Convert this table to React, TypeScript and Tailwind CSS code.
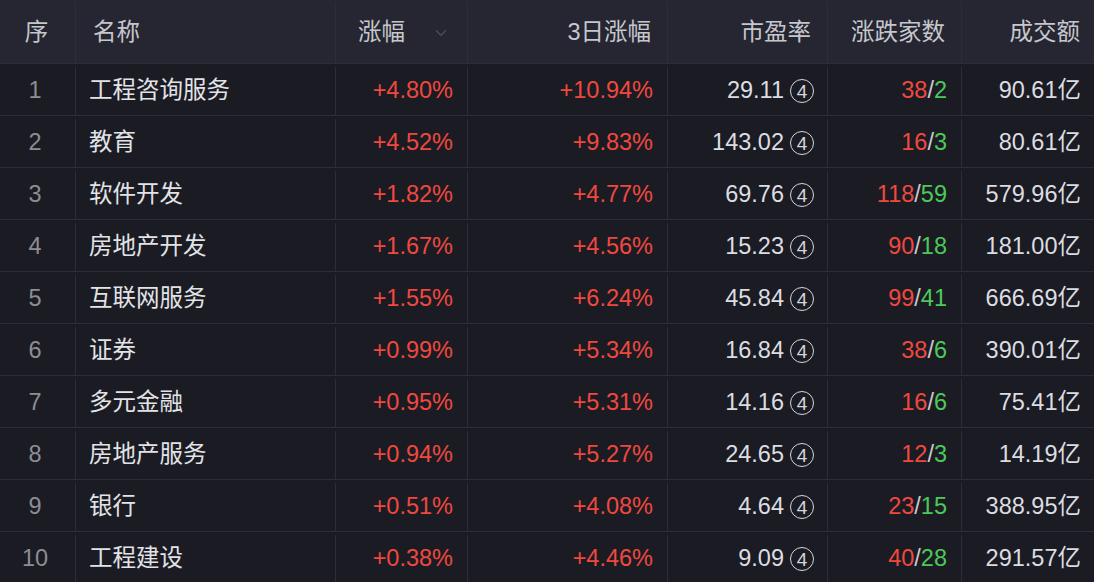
import { ChevronDown } from "lucide-react";

type Row = {
  name: string;
  chg: string;
  chg3: string;
  pe: string;
  up: number;
  down: number;
  amount: string;
};

const rows: Row[] = [
  { name: "工程咨询服务", chg: "+4.80%", chg3: "+10.94%", pe: "29.11", up: 38, down: 2, amount: "90.61亿" },
  { name: "教育", chg: "+4.52%", chg3: "+9.83%", pe: "143.02", up: 16, down: 3, amount: "80.61亿" },
  { name: "软件开发", chg: "+1.82%", chg3: "+4.77%", pe: "69.76", up: 118, down: 59, amount: "579.96亿" },
  { name: "房地产开发", chg: "+1.67%", chg3: "+4.56%", pe: "15.23", up: 90, down: 18, amount: "181.00亿" },
  { name: "互联网服务", chg: "+1.55%", chg3: "+6.24%", pe: "45.84", up: 99, down: 41, amount: "666.69亿" },
  { name: "证券", chg: "+0.99%", chg3: "+5.34%", pe: "16.84", up: 38, down: 6, amount: "390.01亿" },
  { name: "多元金融", chg: "+0.95%", chg3: "+5.31%", pe: "14.16", up: 16, down: 6, amount: "75.41亿" },
  { name: "房地产服务", chg: "+0.94%", chg3: "+5.27%", pe: "24.65", up: 12, down: 3, amount: "14.19亿" },
  { name: "银行", chg: "+0.51%", chg3: "+4.08%", pe: "4.64", up: 23, down: 15, amount: "388.95亿" },
  { name: "工程建设", chg: "+0.38%", chg3: "+4.46%", pe: "9.09", up: 40, down: 28, amount: "291.57亿" },
];

const cols = "grid grid-cols-[75px_260px_132px_200px_160px_134px_133px]";
const cell = "flex items-center border-l border-[#2c2d38]";

// the circled "4" after each P/E value
function Circled({ n }: { n: number }) {
  return (
    <span className="ml-[6px] flex h-[24px] w-[24px] shrink-0 items-center justify-center rounded-full border-[1.5px] border-[#d6d7dc] pt-[1px] text-[19px] leading-none text-[#d6d7dc]">
      {n}
    </span>
  );
}

export default function App() {
  return (
    <div
      className="h-[582px] w-[1094px] overflow-hidden bg-[#1b1c23] text-[23.5px] leading-none"
      style={{ fontFamily: '"Liberation Sans", "Noto Sans CJK SC", sans-serif' }}
    >
      {/* header */}
      <div className={`${cols} h-[64px] border-b border-[#2c2d38] bg-[#252631] pt-[2px] text-[#c6c7cd]`}>
        <div className="flex items-center justify-center pr-[2px]">序</div>
        <div className={`${cell} pl-[17px]`}>名称</div>
        <div className={`${cell} justify-end pr-[17px]`}>
          <span>涨幅</span>
          <ChevronDown className="ml-[27px] h-[18px] w-[18px] text-[#4b4c5a]" strokeWidth={2} />
        </div>
        <div className={`${cell} justify-end pr-[16px]`}>3日涨幅</div>
        <div className={`${cell} justify-end pr-[16px]`}>市盈率</div>
        <div className={`${cell} justify-end pr-[16px]`}>涨跌家数</div>
        <div className={`${cell} justify-end pr-[14px]`}>成交额</div>
      </div>

      {rows.map((r, i) => (
        <div key={r.name} className={`${cols} h-[52px] border-b border-[#2c2d38] pt-[3px] text-[#dcdde2]`}>
          <div className="flex items-center justify-center pr-[5px] text-[#8c8d95]">{i + 1}</div>
          <div className={`${cell} pl-[13px] text-[#e2e3e7]`}>{r.name}</div>
          <div className={`${cell} justify-end pr-[14px] text-[#f0483f]`}>{r.chg}</div>
          <div className={`${cell} justify-end pr-[14px] text-[#f0483f]`}>{r.chg3}</div>
          <div className={`${cell} justify-end pr-[13px]`}>
            <span>{r.pe}</span>
            <Circled n={4} />
          </div>
          <div className={`${cell} justify-end pr-[14px]`}>
            <span className="text-[#f0483f]">{r.up}</span>
            <span className="text-[#c9cad0]">/</span>
            <span className="text-[#4cc95a]">{r.down}</span>
          </div>
          <div className={`${cell} justify-end pr-[13px]`}>{r.amount}</div>
        </div>
      ))}
    </div>
  );
}
